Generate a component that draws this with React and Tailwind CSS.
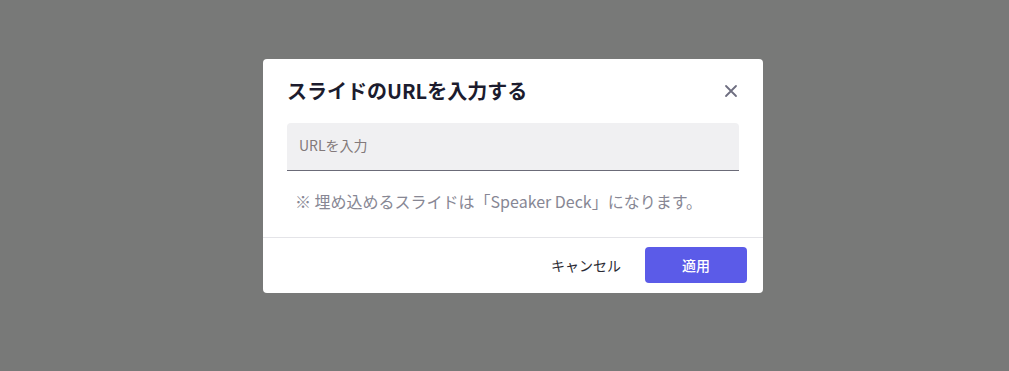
import React, { useState } from "react";

const font = { fontFamily: '"Noto Sans CJK JP", "Noto Sans", sans-serif' };

function CloseIcon() {
  return (
    <svg width="14" height="14" viewBox="0 0 14 14" fill="none" stroke="currentColor" strokeWidth="1.8" strokeLinecap="round">
      <path d="M2 2l10 10M12 2L2 12" />
    </svg>
  );
}

export default function App() {
  const [url, setUrl] = useState("");

  return (
    <div className="min-h-screen w-full bg-[#787978] flex justify-center pt-[59px] pl-[17px]" style={font}>
      <div className="w-[500px] h-[234px] bg-white rounded-[4px] flex flex-col">
        {/* header */}
        <div className="flex items-center justify-between pl-6 pr-[22px] pt-[16px] pb-[16px]">
          <h2 className="text-[20px] leading-[32px] font-bold text-[#1c1c2e]">スライドのURLを入力する</h2>
          <button className="text-[#6e6e80] w-5 h-5 flex items-center justify-center" aria-label="閉じる">
            <CloseIcon />
          </button>
        </div>

        {/* body */}
        <div className="px-6">
          <input
            value={url}
            onChange={e => setUrl(e.target.value)}
            placeholder="URLを入力"
            className="w-full h-[48px] px-3 pb-[3px] rounded-t-[4px] bg-[#f0f0f2] border-b border-[#6b6b78] text-[14px] text-[#1c1c2e] placeholder-[#82797a] outline-none"
          />
          <p className="mt-[18px] pl-2 text-[16px] leading-[24px] text-[#878794]">
            ※ 埋め込めるスライドは「Speaker Deck」になります。
          </p>
        </div>

        {/* footer */}
        <div className="mt-auto border-t border-[#e4e4e8] flex items-center justify-end gap-2 px-4 pt-[9px] pb-[10px]">
          <button className="h-9 px-4 text-[14px] text-[#2a2a33]">キャンセル</button>
          <button className="h-9 w-[102px] rounded-[4px] bg-[#5b5be8] text-[14px] font-medium text-white">適用</button>
        </div>
      </div>
    </div>
  );
}
